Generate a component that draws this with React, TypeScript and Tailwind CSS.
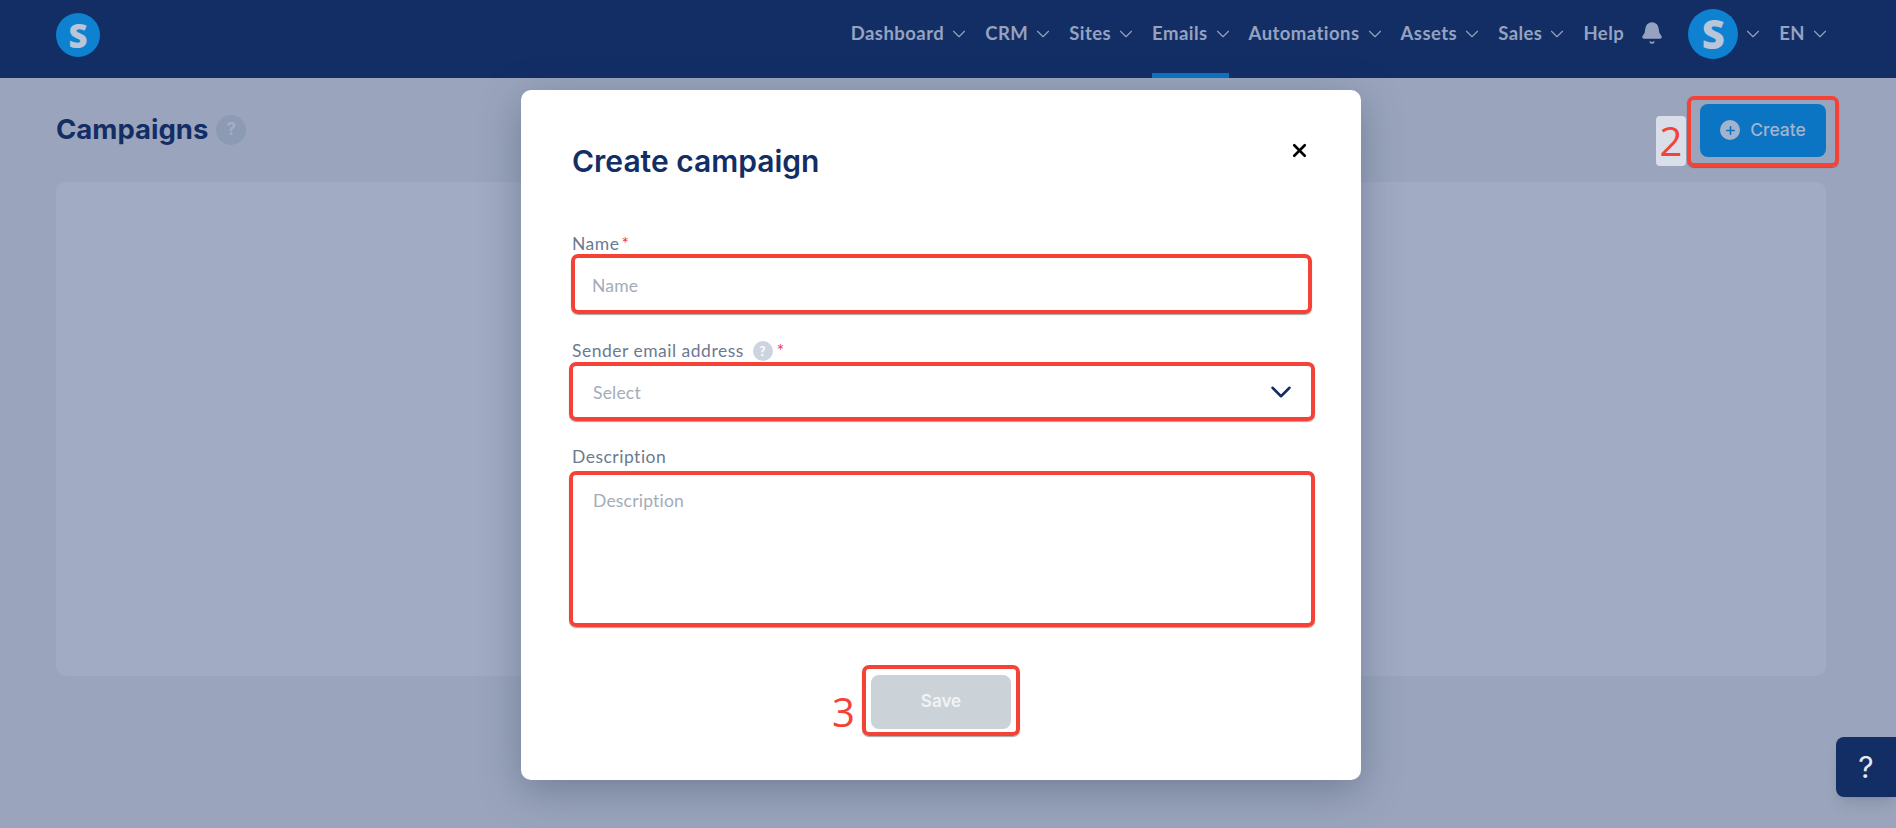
import { ChevronDown, Bell, Plus, X } from "lucide-react";

const navFont = { fontFamily: '"Lato", "Noto Sans", sans-serif' };

function NavItem({ label, chevron = true, active = false, tight = false }: { label: string; chevron?: boolean; active?: boolean; tight?: boolean }) {
  return (
    <div className={`relative flex h-full items-center pb-[10px] ${tight ? "mr-[-4px]" : ""}`}>
      <span className="text-[18.5px] font-bold tracking-[0.45px] text-[#95a3c0]">{label}</span>
      {chevron && <ChevronDown className="ml-[4px] mr-[-5px] h-[22px] w-[22px] text-[#95a3c0]" strokeWidth={1.2} />}
      {active && <div className="absolute bottom-0 left-0 right-[0px] h-[5px] bg-[#0b75c4]" />}
    </div>
  );
}

function Logo({ size }: { size: "sm" | "lg" }) {
  return size === "sm" ? (
    <div className="mb-[8px] flex h-[44px] w-[44px] items-center justify-center rounded-full bg-[#0e82d0]">
      <span className="font-['Open_Sans'] text-[33px] font-extrabold leading-none text-[#b9c6d9]">S</span>
    </div>
  ) : (
    <div className="flex h-[50px] w-[50px] items-center justify-center rounded-full bg-[#0e82d0]">
      <span className="font-['Open_Sans'] text-[40px] font-extrabold leading-none text-[#b9c6d9]">S</span>
    </div>
  );
}

function Label({ children }: { children: React.ReactNode }) {
  return <div className="flex h-[20px] items-center text-[17.5px] leading-[20px] tracking-[0.5px] text-[#6c7a90]">{children}</div>;
}

const field = "rounded-[7px] border-[4px] border-[#f44336] shadow-[0_1px_1px_rgba(0,0,0,0.35)] text-[17.5px] tracking-[0.2px] text-[#a3acb8]";

export default function App() {
  return (
    <div className="relative h-[828px] w-[1896px] overflow-hidden bg-[#9aa5bd] font-['Inter']">
      <header style={navFont} className="flex h-[78px] items-center justify-between bg-[#132e65] pl-[56px] pr-[70px]">
        <Logo size="sm" />
        <nav className="flex h-full items-center gap-[20px]">
          <NavItem label="Dashboard" />
          <NavItem label="CRM" />
          <NavItem label="Sites" />
          <NavItem label="Emails" active />
          <NavItem label="Automations" />
          <NavItem label="Assets" />
          <NavItem label="Sales" />
          <NavItem label="Help" chevron={false} tight />
          <div className="flex h-full items-center pb-[12px]">
            <Bell className="h-[24px] w-[24px] fill-[#95a3c0] text-[#95a3c0]" strokeWidth={1.5} />
          </div>
          <div className="ml-[4px] flex h-full items-center pb-[10px]">
            <Logo size="lg" />
            <ChevronDown className="ml-[4px] mr-[-5px] h-[22px] w-[22px] text-[#95a3c0]" strokeWidth={1.2} />
          </div>
          <NavItem label="EN" />
        </nav>
      </header>

      <main className="pl-[56px] pr-[70px]">
        <div className="flex h-[104px] items-center justify-between">
          <div className="flex items-center gap-[8px]">
            <h1 className="text-[27.5px] font-bold leading-none text-[#132e65]">Campaigns</h1>
            <div className="flex h-[30px] w-[30px] items-center justify-center rounded-full bg-[#8d9ab4] text-[17px] font-bold text-[#a3aec5]">?</div>
          </div>
          <div className="relative">
            <button className="flex h-[53px] w-[126px] items-center justify-center gap-[10px] rounded-[8px] bg-[#0b75c4] text-[17.5px] font-medium text-[#a3b3cc]">
              <span className="flex h-[20px] w-[20px] items-center justify-center rounded-full bg-[#a3b3cc]">
                <Plus className="h-[13px] w-[13px] text-[#0b75c4]" strokeWidth={3} />
              </span>
              Create
            </button>
            <div className="absolute left-[-13px] right-[-13px] top-[-8px] h-[71px] rounded-[7px] border-[4px] border-[#f44336] shadow-[0_1px_1px_rgba(0,0,0,0.35)]" />
            <div className="absolute left-[-44px] top-[12px] flex h-[50px] w-[30px] items-center justify-center rounded-[4px] bg-[#dadee8] font-['Open_Sans'] text-[40px] leading-none text-[#f44336]">2</div>
          </div>
        </div>
        <div className="h-[494px] rounded-[10px] bg-[#a1abc3]" />
      </main>

      <div className="absolute bottom-[31px] right-0 flex h-[60px] w-[60px] items-center justify-center rounded-l-[8px] bg-[#132e65] text-[30px] text-[#e4e9f2] shadow-lg">?</div>

      <div className="absolute left-[521px] top-[90px] flex h-[690px] w-[840px] flex-col rounded-[10px] bg-white px-[51px] shadow-[0_10px_40px_rgba(40,50,80,0.35)]">
        <div className="flex h-[144px] items-start justify-between pt-[52px]">
          <h2 className="text-[30px] font-semibold leading-[38px] text-[#132e65]">Create campaign</h2>
          <X className="mr-[0px] mt-[-2px] h-[21px] w-[21px] text-black" strokeWidth={3} />
        </div>
        <div style={navFont} className="flex flex-col">
          <Label>
            Name<span className="ml-[2px] text-[#f0325a]">*</span>
          </Label>
          <div className={`-ml-[1px] flex h-[60px] w-[741px] items-center pl-[17px] pt-[5px] ${field}`}>Name</div>
          <div className="mt-[27px]">
            <Label>
              Sender email address
              <span className="ml-[9px] flex h-[20px] w-[20px] items-center justify-center rounded-full bg-[#ccd5df] text-[13px] font-bold text-white">?</span>
              <span className="ml-[4px] text-[#f0325a]">*</span>
            </Label>
          </div>
          <div className={`-mx-[3px] mt-[1px] flex h-[59px] w-[746px] items-center justify-between pl-[20px] pr-[13px] ${field}`}>
            <span className="pt-[4px]">Select</span>
            <ChevronDown className="h-[34px] w-[34px] text-[#132e65]" strokeWidth={1.8} />
          </div>
          <div className="mt-[26px]">
            <Label>Description</Label>
          </div>
          <div className={`-mx-[3px] mt-[4px] h-[156px] w-[746px] pl-[20px] pt-[15px] leading-[22px] ${field}`}>Description</div>
        </div>
        <div className="mt-[38px] flex justify-center">
          <div className="relative rounded-[7px] border-[4px] border-[#f44336] px-[5px] pb-[3px] pt-[6px] shadow-[0_1px_1px_rgba(0,0,0,0.35)]">
            <button className="flex h-[54px] w-[140px] items-center justify-center rounded-[8px] bg-[#cbd2d8] text-[17px] font-semibold text-[#f1f3f5]">Save</button>
            <span className="absolute left-[-34px] top-[21px] font-['Open_Sans'] text-[40px] leading-[44px] text-[#f44336]">3</span>
          </div>
        </div>
      </div>
    </div>
  );
}
